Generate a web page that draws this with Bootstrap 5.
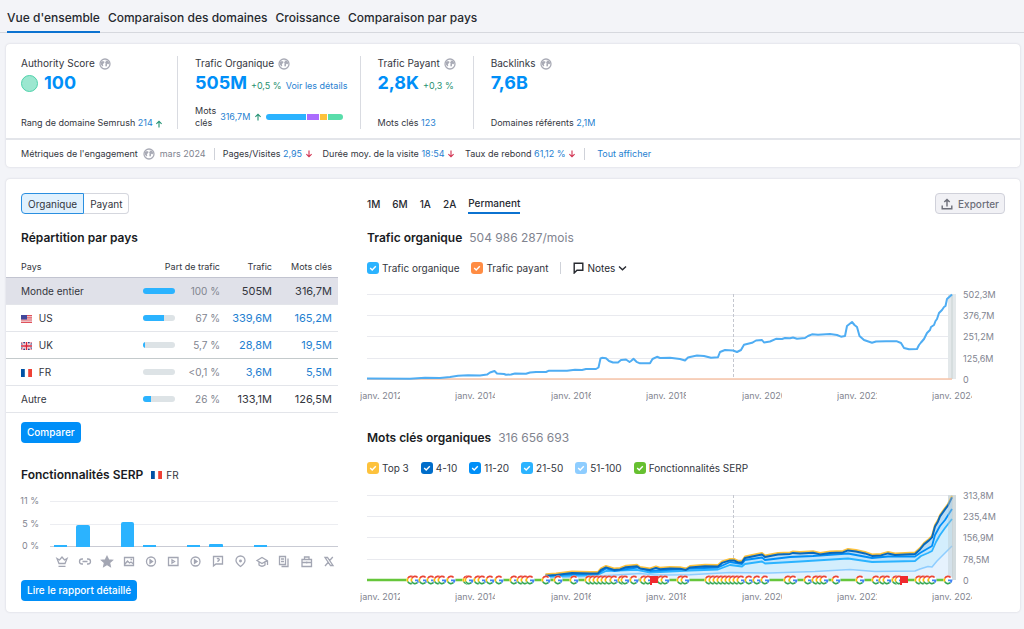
<!DOCTYPE html>
<html lang="fr">
<head>
<meta charset="utf-8">
<meta name="viewport" content="width=device-width, initial-scale=1">
<title>Vue d'ensemble du domaine</title>
<link href="https://cdn.jsdelivr.net/npm/bootstrap@5.3.0/dist/css/bootstrap.min.css" rel="stylesheet">
<style>
:root{--ink:#33363e;--muted-ink:#81848f;--link:#1f7fd1;--blue:#008ff8;--sky:#2bb3ff;--line:#e3e5ea}
body{font-family:Inter,"Liberation Sans",sans-serif;font-size:10px;line-height:14px;color:var(--ink);background:#f3f4f8}
a{color:var(--link);text-decoration:none}
.topnav{height:33px;border-bottom:1px solid #d6d8de;padding:0 7px;gap:8px;font-size:12px;font-weight:500}
.topnav a{color:#26292f;height:33px;line-height:35px;white-space:nowrap}
.topnav a.active{border-bottom:2px solid #0b72d0}
.panel{background:#fff;border-radius:4px;box-shadow:0 0 2px rgba(60,65,85,.22)}
.panels{padding:11px 4px 16px 6px;gap:12px}
.kpis{padding:12px 15px;height:94px}
.kpi{padding:0 17px;border-left:1px solid #d9dbe1;height:73px;white-space:nowrap}
.kpi:first-child{border:0;padding-left:0;width:156px}
.kpi.wide{padding-right:12px}
.kpi h2{font-size:10px;line-height:15px;font-weight:400;margin:0}
.kpi strong{font-size:18px;line-height:24px;font-weight:700;color:var(--blue)}
.fine{font-size:9px;line-height:12px}
.up{color:#1f9171}
.quiet{color:var(--muted-ink)}
.globe{width:12px;height:12px;flex:none}
.scoredot{width:17px;height:17px;margin-right:6px;border-radius:50%;background:#9ce7d0;border:1px solid #4fd2ab}
.mix{width:77px;height:6px;border-radius:3px;overflow:hidden;gap:1px}
.mix span{height:6px}
.engage{border-top:2px solid var(--line);height:29px;padding:0 15px;white-space:nowrap}
.engage .globe{margin:0 5px}
.metric{margin-right:10px}
.metric.final{margin-right:0}
.vline{width:1px;height:12px;background:#cfd2d9}
.report{padding:14px 15px 9px 0}
.leftcol{width:332px;flex:none}
.inset{padding-left:15px}
.toggle button{height:21px;padding:0 6px;background:#fff;color:var(--ink);border:1px solid #d5d7de}
.toggle button:first-child{border-radius:4px 0 0 4px;background:#e0f1fe;border-color:#2a8fe0}
.toggle button:last-child{border-radius:0 4px 4px 0;border-left:0}
h3{font-size:12px;line-height:16px;font-weight:600;color:#191b23;margin:0}
.countries{width:100%;table-layout:fixed;border-collapse:collapse;margin-top:10px;text-align:right}
.countries th{font-size:9px;font-weight:400;height:21px;padding:1px 6px 0 0;border-bottom:1px solid #c2c4d0}
.countries td{height:27px;padding:0 6px 0 0;border-bottom:1px solid var(--line);white-space:nowrap}
.countries td:nth-child(n+4){font-size:11px}
.countries th:first-child,.countries td:first-child{text-align:left;padding-left:15px}
.countries tr.sel td{background:#e0e1e9}
.countries tr.thick td{border-bottom-color:#c4cacc}
.meter{width:32px;height:6px;border-radius:3px;background:#dde3e6;overflow:hidden}
.meter div{height:6px;background:var(--sky)}
.c-meter{width:74px}.c-share{width:45px}.c-traffic{width:52px}.c-words{width:60px}
.flag{width:11px;height:8px}
.solid{height:21px;border:0;border-radius:4px;background:var(--blue);color:#fff;font-weight:500;padding:0 6px}
.compare{margin:9px 0 24px}
.periods{gap:12px}
.periods button{border:0;background:none;padding:0;height:21px;font-weight:500;color:#26292f}
.periods button.active{border-bottom:2px solid #0b72d0}
.export{height:21px;border:1px solid #d0d1da;border-radius:4px;background:#f1f1f5;color:#6c6e79;font-weight:500;padding:0 5px;gap:5px}
.rightcol{padding-left:21px;min-width:0}
.within{padding-left:8px}
.count{font-size:12px;line-height:16px;color:var(--muted-ink)}
.headline{gap:7px}
.legend{height:20px;gap:12px;margin:12px 0 8px}
.legend label{display:flex;align-items:center;gap:3px;white-space:nowrap}
.legend input{appearance:none;width:12px;height:12px;border-radius:3px;margin:0;background:var(--c) url("data:image/svg+xml,%3Csvg xmlns='http://www.w3.org/2000/svg' viewBox='0 0 12 12'%3E%3Cpath d='M3.2 6l2 2 3.6-3.8' fill='none' stroke='white' stroke-width='1.4'/%3E%3C/svg%3E")}
.notes{border:0;background:none;padding:0;color:#26292f;gap:3px}
.plot{display:block;width:100%;height:auto;overflow:visible}
.plot text{font-size:9px;fill:var(--muted-ink)}
.serp{margin:8px 0 9px}
</style>
<script src="https://cdn.jsdelivr.net/npm/bootstrap@5.3.0/dist/js/bootstrap.bundle.min.js"></script>
</head>
<body>
<svg width="0" height="0" class="position-absolute" aria-hidden="true">
  <symbol id="globe" viewBox="0 0 12 12"><circle cx="6" cy="6" r="5" fill="#fff" stroke="#a9abb6" stroke-width="1.3"/><path d="M1.800 4l2.200-1 1.600.8-.6 1.500-1.200.6.500 1.700-.8.900L2 6.700zM6.600 2.600l2.200.2 1.400 2-.5 1.400-1.500-.4-.3 2.200-1 .8-.7-1.800.6-1.200-1-1 1-.8z" fill="#a9abb6"/></symbol>
  <symbol id="us" viewBox="0 0 11 8"><path fill="#f3e4e6" d="M0 0h11v8H0z"/><path d="M0 .6h11M0 2.800h11M0 5h11M0 7.300h11" stroke="#e0525c" stroke-width="1.200"/><path fill="#41479b" d="M0 0h6v4.500H0z"/></symbol>
  <symbol id="uk" viewBox="0 0 11 8"><path fill="#2b3f83" d="M0 0h11v8H0z"/><path d="M0 0l11 8M11 0L0 8" stroke="#fff" stroke-width="1.800"/><path d="M0 0l11 8M11 0L0 8" stroke="#d8233a" stroke-width=".6"/><path d="M5.500 0v8M0 4h11" stroke="#fff" stroke-width="3"/><path d="M5.500 0v8M0 4h11" stroke="#d8233a" stroke-width="1.600"/></symbol>
  <symbol id="fr" viewBox="0 0 11 8"><path fill="#fff" d="M0 0h11v8H0z"/><path fill="#0052a5" d="M0 0h3.800v8H0z"/><path fill="#ef4135" d="M7.200 0H11v8H7.200z"/></symbol>
  <symbol id="rise" viewBox="0 0 8 8"><path d="M4 7.500V1.200M1.400 3.800L4 1.200l2.600 2.600" fill="none" stroke="#1f9171" stroke-width="1.100"/></symbol>
  <symbol id="fall" viewBox="0 0 8 8"><path d="M4 .5v6.300M1.400 4.200L4 6.800l2.600-2.600" fill="none" stroke="#d1304f" stroke-width="1.100"/></symbol>
  <symbol id="goog" viewBox="-5 -5 10 10"><circle r="4.600" fill="#fff"/><g fill="none" stroke-width="1.700"><path d="M2.600-2.500A3.600 3.600 0 0 0-3.200-1.700" stroke="#ea4335"/><path d="M-3.200-1.700a3.600 3.600 0 0 0 0 3.400" stroke="#fbbc05"/><path d="M-3.200 1.700A3.600 3.600 0 0 0 2.400 2.700" stroke="#34a853"/><path d="M2.400 2.700A3.600 3.600 0 0 0 3.600.3H0" stroke="#4285f4"/></g></symbol>
</svg>

<nav class="topnav d-flex" aria-label="Sections">
  <a class="active" href="#">Vue d'ensemble</a><a href="#">Comparaison des domaines</a><a href="#">Croissance</a><a href="#">Comparaison par pays</a>
</nav>

<main class="panels d-flex flex-column">
<section class="panel">
  <div class="kpis d-flex">
    <div class="kpi d-flex flex-column">
      <h2 class="d-flex align-items-center gap-1">Authority Score <svg class="globe"><use href="#globe"/></svg></h2>
      <div class="d-flex align-items-center"><span class="scoredot"></span><strong>100</strong></div>
      <div class="fine mt-auto">Rang de domaine Semrush <a href="#">214</a> <svg width="8" height="8"><use href="#rise"/></svg></div>
    </div>
    <div class="kpi wide d-flex flex-column">
      <h2 class="d-flex align-items-center gap-1">Trafic Organique <svg class="globe"><use href="#globe"/></svg></h2>
      <div class="d-flex align-items-baseline gap-1"><strong>505M</strong><span class="fine up">+0,5 %</span><a class="fine" href="#">Voir les détails</a></div>
      <div class="fine mt-auto d-flex align-items-center gap-1"><span>Mots<br>clés</span><a href="#">316,7M</a><svg width="8" height="8"><use href="#rise"/></svg>
        <div class="mix d-flex"><span style="flex:41;background:#2bb3ff"></span><span style="flex:12;background:#ab6cfe"></span><span style="flex:7;background:#fdc23c"></span><span style="flex:16;background:#59ddaa"></span></div></div>
    </div>
    <div class="kpi d-flex flex-column">
      <h2 class="d-flex align-items-center gap-1">Trafic Payant <svg class="globe"><use href="#globe"/></svg></h2>
      <div class="d-flex align-items-baseline gap-1"><strong>2,8K</strong><span class="fine up">+0,3 %</span></div>
      <div class="fine mt-auto">Mots clés <a href="#">123</a></div>
    </div>
    <div class="kpi d-flex flex-column">
      <h2 class="d-flex align-items-center gap-1">Backlinks <svg class="globe"><use href="#globe"/></svg></h2>
      <div class="d-flex"><strong>7,6B</strong></div>
      <div class="fine mt-auto">Domaines référents <a href="#">2,1M</a></div>
    </div>
  </div>
  <div class="engage fine d-flex align-items-center">
    <span>Métriques de l'engagement</span><svg class="globe"><use href="#globe"/></svg><span class="quiet">mars 2024</span>
    <span class="vline mx-2"></span>
    <span class="metric">Pages/Visites <a href="#">2,95</a> <svg width="8" height="8"><use href="#fall"/></svg></span>
    <span class="metric">Durée moy. de la visite <a href="#">18:54</a> <svg width="8" height="8"><use href="#fall"/></svg></span>
    <span class="metric final">Taux de rebond <a href="#">61,12 %</a> <svg width="8" height="8"><use href="#fall"/></svg></span>
    <span class="vline mx-2"></span><a class="ms-1" href="#">Tout afficher</a>
  </div>
</section>

<section class="panel report d-flex">
  <div class="leftcol">
    <div class="inset">
      <div class="toggle d-flex"><button type="button">Organique</button><button type="button">Payant</button></div>
      <h3 class="mt-3">Répartition par pays</h3>
    </div>
    <table class="countries">
      <colgroup><col><col class="c-meter"><col class="c-share"><col class="c-traffic"><col class="c-words"></colgroup>
      <thead><tr><th>Pays</th><th colspan="2">Part de trafic</th><th>Trafic</th><th>Mots clés</th></tr></thead>
      <tbody>
        <tr class="sel"><td>Monde entier</td><td><div class="meter ms-auto"><div style="width:100%"></div></div></td><td class="quiet">100 %</td><td>505M</td><td>316,7M</td></tr>
        <tr><td><svg class="flag me-1"><use href="#us"/></svg> US</td><td><div class="meter ms-auto"><div style="width:67%"></div></div></td><td class="quiet">67 %</td><td><a href="#">339,6M</a></td><td><a href="#">165,2M</a></td></tr>
        <tr class="thick"><td><svg class="flag me-1"><use href="#uk"/></svg> UK</td><td><div class="meter ms-auto"><div style="width:6%"></div></div></td><td class="quiet">5,7 %</td><td><a href="#">28,8M</a></td><td><a href="#">19,5M</a></td></tr>
        <tr><td><svg class="flag me-1"><use href="#fr"/></svg> FR</td><td><div class="meter ms-auto"></div></td><td class="quiet">&lt;0,1 %</td><td><a href="#">3,6M</a></td><td><a href="#">5,5M</a></td></tr>
        <tr><td>Autre</td><td><div class="meter ms-auto"><div style="width:26%"></div></div></td><td class="quiet">26 %</td><td>133,1M</td><td>126,5M</td></tr>
      </tbody>
    </table>
    <div class="inset">
      <button type="button" class="solid compare">Comparer</button>
      <div class="d-flex align-items-center"><h3 class="me-2">Fonctionnalités SERP</h3><svg class="flag me-1"><use href="#fr"/></svg>FR</div>
      <svg class="plot serp" viewBox="0 0 317 80" role="img" aria-label="Fonctionnalités SERP">
        <g text-anchor="end"><text x="18" y="13">11 %</text><text x="18" y="36">5 %</text><text x="18" y="58">0 %</text></g>
        <path d="M29 10.500H317M29 33.500H317" stroke="#ecedf1"/><path d="M29 55.500H317" stroke="#c9cbd4"/>
        <path fill="#2bb3ff" d="M33 54h13v2H33zM55 56V36q0-2 2-2h10q2 0 2 2V56zM100 56V33q0-2 2-2h9q2 0 2 2V56zM122 54h13v2H122zM166 54h13v2H166zM188 56V54q0-1 1-1h12q1 0 1 1V56zM233 54h13v2H233z"/>
        <g fill="none" stroke="#a3a6b3" stroke-width="1.300">
          <path d="M36 67.500l2 5h6l2-5-2.500 1.500-2.500-3-2.500 3zM37.500 75.300h7"/>
          <path d="M62 73h-1a2.500 2.500 0 0 1 0-5h1M66 68h1a2.500 2.500 0 0 1 0 5h-1M61.500 70.500h5"/>
          <path d="M86 65.500l1.600 3.400 3.700.4-2.800 2.400.8 3.700-3.300-1.900-3.300 1.900.8-3.700-2.800-2.400 3.700-.4z" fill="#a3a6b3"/>
          <path d="M103.500 66.500h9v8h-9zM104 73l2.500-3 2 2 1.500-1 2.500 2M109.500 68.500h1.500"/>
          <circle cx="130" cy="70.500" r="4.500"/><path d="M129 68.800v3.400l2.500-1.700z" fill="#a3a6b3"/>
          <path d="M147.500 66.500h9.500v8h-9.500zM151 69v3l2.500-1.500z"/>
          <circle cx="174.500" cy="70.500" r="4.500"/><path d="M173.500 68.800v3.400l2.500-1.700z" fill="#a3a6b3"/>
          <path d="M192.500 75v-9.500h9V73H195zM196 68q1-1 2 0t-1 2v1"/>
          <path d="M219.500 75.500q-4.500-3.500-4.500-6a4.500 4.500 0 0 1 9 0q0 2.500-4.500 6z"/><circle cx="219.500" cy="70" r=".8" fill="#a3a6b3"/>
          <path d="M236 69.500l5-3 5 3-5 3zM238 71v3q3 2.500 6 0v-3M246.500 69.500v4.500"/>
          <path d="M258.500 65.500h6v8h-6zM260.500 75.500h6.500v-8M260 68h3M260 70.500h3"/>
          <path d="M281 68.500h9.500v7H281zM283.500 68.500v-2.500h4.500v2.500M281 71.500h9.500M285.700 70.500v2"/>
          <path d="M304 66.500h2.500l5.500 8h-2.500zM311.800 66l-3.300 3.800M307.300 71.200l-3.300 3.800"/>
        </g>
      </svg>
      <button type="button" class="solid">Lire le rapport détaillé</button>
    </div>
  </div>

  <div class="rightcol flex-grow-1">
    <div class="within d-flex justify-content-between">
      <div class="periods d-flex"><button type="button">1M</button><button type="button">6M</button><button type="button">1A</button><button type="button">2A</button><button type="button" class="active">Permanent</button></div>
      <button type="button" class="export d-flex align-items-center"><svg width="12" height="12" fill="none" stroke="#6c6e79" stroke-width="1.400"><path d="M6 8.500V1.500M3.300 4L6 1.500 8.700 4M1.200 7.500v3.300h9.600V7.500"/></svg>Exporter</button>
    </div>
    <div class="within">
      <div class="headline d-flex mt-3"><h3>Trafic organique</h3><span class="count">504 986 287/mois</span></div>
      <div class="legend d-flex align-items-center">
        <label><input type="checkbox" checked style="--c:#2bb3ff">Trafic organique</label>
        <label><input type="checkbox" checked style="--c:#ff8c43">Trafic payant</label>
        <span class="vline"></span>
        <button type="button" class="notes d-flex align-items-center"><svg width="11" height="12" fill="none" stroke="#26292f" stroke-width="1.400"><path d="M1.200 11V1.200h8.600v7H4z"/></svg>Notes<svg width="9" height="8" fill="none" stroke="#26292f" stroke-width="1.400"><path d="M1 2.500l3.500 3.300L8 2.500"/></svg></button>
      </div>
    </div>
    <svg id="traffic" class="plot" viewBox="359 286 646 120" role="img" aria-label="Trafic organique"></svg>
    <div class="within">
      <div class="headline d-flex mt-4"><h3>Mots clés organiques</h3><span class="count">316 656 693</span></div>
      <div class="legend d-flex align-items-center">
        <label><input type="checkbox" checked style="--c:#fdc23c">Top 3</label>
        <label><input type="checkbox" checked style="--c:#006dca">4-10</label>
        <label><input type="checkbox" checked style="--c:#008ff8">11-20</label>
        <label><input type="checkbox" checked style="--c:#2bb3ff">21-50</label>
        <label><input type="checkbox" checked style="--c:#8ecdff">51-100</label>
        <label><input type="checkbox" checked style="--c:#66c030">Fonctionnalités SERP</label>
      </div>
    </div>
    <svg id="keywords" class="plot" viewBox="359 486 646 117" role="img" aria-label="Mots clés organiques"></svg>
  </div>
</section>
</main>

<script>
// Grid lines, value labels and clipped date labels shared by both charts.
function frame(top, values) {
  let s = '';
  values.forEach((v, i) => {
    const y = Math.round(top + i * 21.2) + .5;
    s += `<path d="M367 ${y}H952" stroke="#e9eaef"/><text x="963" y="${y + 3}">${v}</text>`;
  });
  for (let i = 0; i < 7; i++)
    s += `<svg x="${Math.round(360 + i * 95.4)}" y="${top + 95}" width="40" height="16"><text x="0" y="10">janv. ${2012 + i * 2}</text></svg>`;
  return s + `<path d="M733.5 ${top}v85" stroke="#c4c7cf" stroke-dasharray="3 2"/><path d="M948 ${top}h8v85h-8z" fill="#e3e8ea"/><path d="M952 ${top}v85" stroke="#c8d2d2"/>`;
}
const line = (p, c, w) => `<polyline points="${p}" fill="none" stroke="${c}" stroke-width="${w}" stroke-linejoin="round"/>`;
const area = (p, c) => `<polygon points="545,579 ${p} 952,579" fill="${c}"/>`;

const visits = '367,378.5 410,378.7 425,377.8 440,378 450,377 458,375.8 468,375.2 480,375.6 487,374.6 490,372.5 494.5,371 497,373.5 504,374 506,374.8 511,374.5 515,373.5 526,373.8 530,372.5 536,372 546,372 549,370.7 567,370.7 575,369.7 582,370 586,369 596,369 598.5,367.5 600.5,358.5 602,357.8 606,358.3 609,361 613,362.5 618,362.5 621,360 626,359.5 629.5,362 631,361 633.5,358.8 636.5,361.8 640,363.3 650,363.3 652.5,359 657,356.8 660,358 670,357.8 680,359 685,360.5 688,357.5 690,357 697,355.6 704,356 711,357.8 718,357.2 720,352 725,350 733,350.5 737,352 741,350 744,344.8 752,342.8 756,340.5 762,340 764,342.5 770,341.5 776,338.8 782,339 785,338 790,338.3 793,337.5 797,338.8 805,338 808,336 812,334.3 818,334.7 830,334 837,335 841,336.7 845,336 847,326 852,322 854.5,325 857,327 859.5,336 864,340 872,342.8 876,341.5 886,341.2 897,341.3 901,343 904,348 909,349.3 917,349 919,345 921,342.5 924,339 925.5,336 927,333 930,330 931,327 934,325 935.5,321 937,319 939,313 942,310 944,307 945.5,306 947,299 952,294.5';
document.getElementById('traffic').innerHTML = frame(294, ['502,3M', '376,7M', '251,2M', '125,6M', '0'])
  + '<path d="M367 379H952" stroke="#f7c4a8" stroke-width="1.5"/>' + line(visits, '#4fadf3', 2);

const top3 = '545.5,574.3 556,573.5 564,572.5 572,571.5 590,572 598,572 601,568.5 606,566 614,568.5 620,568 626,565.8 637,564.8 640,567 650,568.5 656,566.5 660,567.8 670,567 680,567.3 686,568.5 690,566 705,564.8 718,565 722,561.5 730,559 734,559 738,561 742,561 745,556.5 751,555.3 757,554 762,553 765,555.5 778,553 790,552.5 793,551.5 800,552 813,551.3 820,553 830,551.5 843,551 848,549 856,550 865,552 872,554.5 881,554 888,552 895,553.5 905,553 915,552.5 920,548 924,543 929,539 932,536 935,525 938,520 940,515 945,508 948,504 950,500 952,496';
const to10 = top3.split(' ').map(p => { const [x, y] = p.split(',').map(Number); return x + ',' + (y + 1.4); }).join(' ');
const to20 = '545.5,575.5 564,574.5 598,573.5 606,568.5 614,571 637,567.5 650,571 690,568.5 718,567.5 730,562 742,564 745,560 762,557.5 765,560 790,557 813,556 848,553.5 872,558 888,556.5 915,556.5 920,553 932,546 935,535 940,526 945,520 952,509';
const to50 = '545.5,576.5 598,574.8 606,571 637,569.8 650,572.5 690,570.5 718,569.5 730,565 742,566.5 745,564 762,561.5 765,563.5 800,561.5 848,558.5 872,562 915,561 921,556 928,553 932,551 936,542 940,535 945,528 952,519';
const to100 = '545,578 600,576 640,573.5 655,575 690,574.8 730,572.5 770,573 800,572 815,571.5 850,569.5 875,571.5 915,571 920,569 928,566.5 932,567 937,561 943,555 952,546';
const updates = [411,415,423,431,438,442,451,467,469,478,482,490,499,514,521,525,530,546,558,574,589,593,597,601,605,609,614,622,625,634,644,648,661,665,681,685,709,713,717,721,725,729,733,737,741,749,757,765,788,793,808,816,820,824,836,860,876,883,887,896,899,919,923,927,932,948];
document.getElementById('keywords').innerHTML = frame(495, ['313,8M', '235,4M', '156,9M', '78,5M', '0'])
  + area(top3, '#b9dcf5') + area(to20, '#bfe4fc') + area(to50, '#d3eefd') + area(to100, '#e6f2fd')
  + line(to100, '#8ecdff', 1.5) + line(to50, '#2bb3ff', 1.8) + line(to20, '#008ff8', 1.8) + line(top3, '#fdc23c', 2) + line(to10, '#0868bd', 2)
  + '<path d="M948 495h8v85h-8z" fill="#b8c8cd" opacity=".4"/><path d="M367 580H952" stroke="#66c63b" stroke-width="2.5"/>'
  + updates.map(x => `<use href="#goog" x="${x - 5}" y="575" width="10" height="10"/>`).join('')
  + '<path d="M650 576h8v7h-6v2h-2zM900 576h8v7h-6v2h-2z" fill="#f02a2f"/>';
</script>
</body>
</html>
